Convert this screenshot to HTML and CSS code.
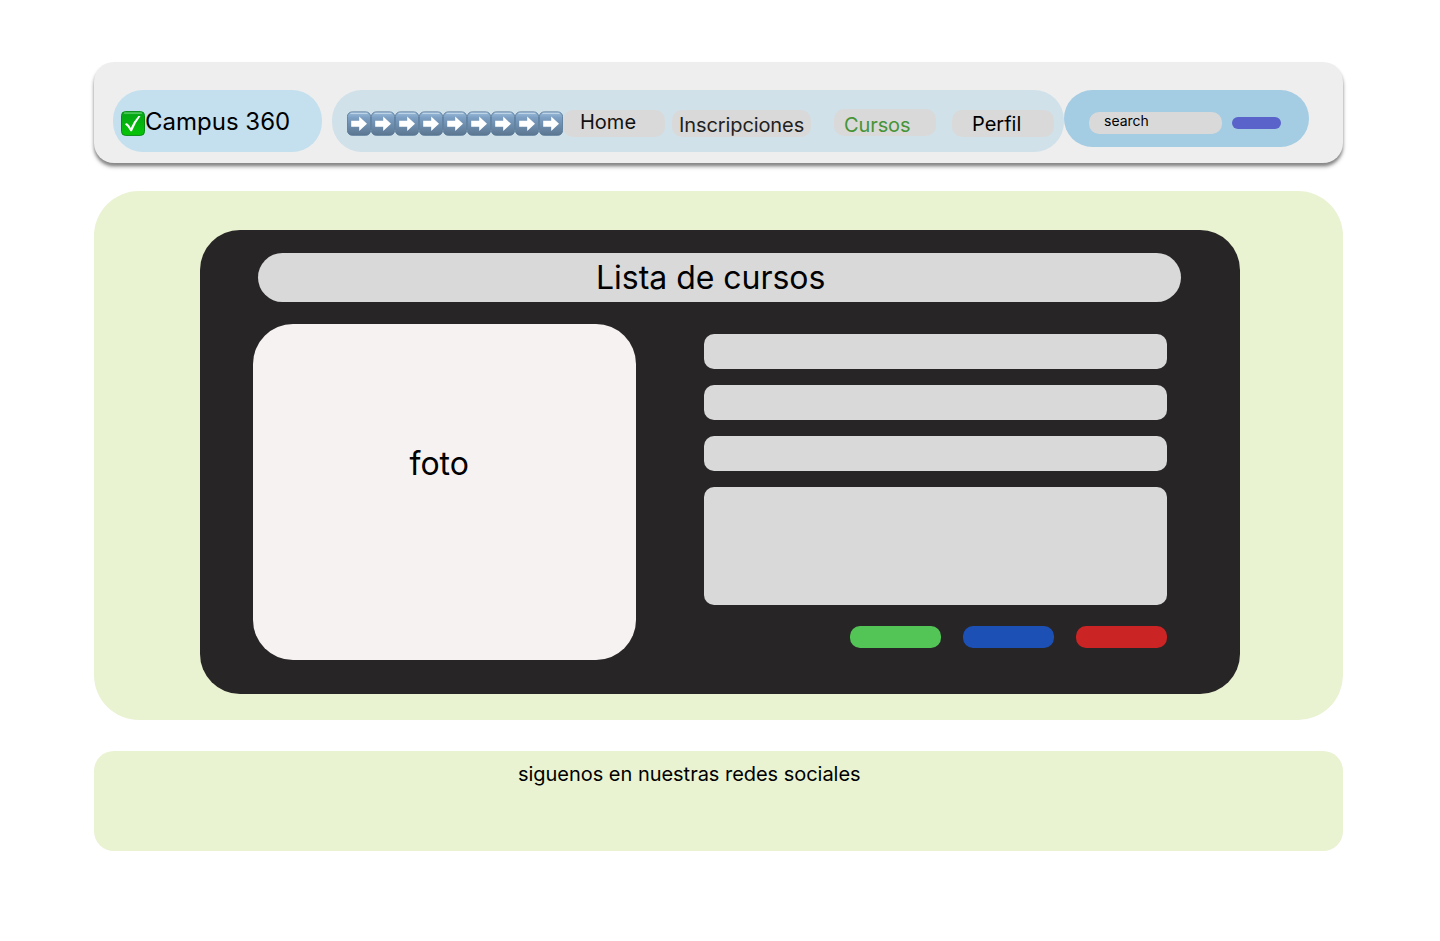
FILE: index.html
```html
<!DOCTYPE html>
<html lang="es">
<head>
<meta charset="utf-8">
<title>Campus 360</title>
<link rel="stylesheet" href="styles.css">
</head>
<body>
<svg width="0" height="0" class="sprite" aria-hidden="true">
  <defs>
    <linearGradient id="green" x1="0" y1="0" x2="0" y2="1">
      <stop offset="0" stop-color="#19b52c"/><stop offset=".15" stop-color="#04a815"/><stop offset="1" stop-color="#06c506"/>
    </linearGradient>
    <linearGradient id="blue" x1="0" y1="0" x2="0" y2="1">
      <stop offset="0" stop-color="#9dbddb"/><stop offset=".25" stop-color="#7c9fc3"/><stop offset="1" stop-color="#5b7690"/>
    </linearGradient>
    <symbol id="arrow" viewBox="0 0 24 25">
      <rect x=".4" y=".9" width="23.2" height="23.4" rx="4.8" fill="url(#blue)" stroke="#587998" stroke-width=".9"/>
      <path d="M4 2.4H20" stroke="#bdd4e6" stroke-width="1.1" stroke-linecap="round"/>
      <path d="M4.2 9.8H12.2V5.6L20 12.8L12.2 20V15.8H4.2Z" fill="#fff"/>
    </symbol>
  </defs>
</svg>
<div class="page">
  <header class="header">
    <div class="brand">
      <svg class="check" viewBox="0 0 24 25">
        <rect x=".5" y=".6" width="23" height="23.8" rx="4" fill="url(#green)" stroke="#078b16"/>
        <path d="M3.5 2.1H20.5" stroke="#75d57d" stroke-width="1" stroke-linecap="round"/>
        <path d="M4 13.2Q5 12 6.3 12.4Q8.3 13.8 9.8 17Q12.5 10.5 17.4 5H19.5Q14.6 11.3 10.9 20.2H9.5Q7.3 15.7 4 13.2Z" fill="#fff"/>
      </svg>
      <span class="brand-name">Campus 360</span>
    </div>
    <nav class="nav">
      <div class="arrows">
        <svg><use href="#arrow"/></svg><svg><use href="#arrow"/></svg><svg><use href="#arrow"/></svg>
        <svg><use href="#arrow"/></svg><svg><use href="#arrow"/></svg><svg><use href="#arrow"/></svg>
        <svg><use href="#arrow"/></svg><svg><use href="#arrow"/></svg><svg><use href="#arrow"/></svg>
      </div>
      <a class="link home">Home</a>
      <a class="link inscripciones">Inscripciones</a>
      <a class="link cursos">Cursos</a>
      <a class="link perfil">Perfil</a>
    </nav>
    <div class="search">
      <div class="search-field">search</div>
      <div class="search-button"></div>
    </div>
  </header>
  <main class="main">
    <section class="card">
      <h1 class="title">Lista de cursos</h1>
      <div class="content">
        <div class="photo">foto</div>
        <div class="form">
          <div class="field"></div>
          <div class="field"></div>
          <div class="field"></div>
          <div class="field area"></div>
          <div class="actions">
            <div class="button green"></div>
            <div class="button blue"></div>
            <div class="button red"></div>
          </div>
        </div>
      </div>
    </section>
  </main>
  <footer class="footer">siguenos en nuestras redes sociales</footer>
</div>
</body>
</html>
```
FILE: styles.css
```css
* { box-sizing: border-box; }
body { margin: 0; background: #fff; color: #000; font-family: Inter, sans-serif; }
.sprite { display: block; }
.page { height: 941px; padding: 62px 97px 0 94px; }
.header {
  display: flex; align-items: flex-start; height: 101px; padding: 28px 0 0 19px;
  background: #eee; border-radius: 20px; box-shadow: 0 4px 4px rgba(0,0,0,.25), 0 3px 3px rgba(0,0,0,.3);
}
.brand {
  display: flex; width: 209px; height: 62px; margin-right: 10px; padding: 16px 0 0 8px;
  background: #c4e0ee; border-radius: 30px;
}
.check { width: 24px; height: 25px; margin-top: 5px; }
.brand-name { font-size: 24px; line-height: 31px; white-space: nowrap; }
.nav {
  display: flex; align-items: flex-start; width: 732px; height: 62px; padding: 20px 0 0 15px;
  background: #d0e1e9; border-radius: 30px;
}
.arrows { display: flex; flex: none; margin-top: 1px; }
.arrows svg { display: block; width: 24px; height: 25px; }
.link {
  flex: none; width: 102px; height: 27px; background: #d9d9d9; border-radius: 10px;
  font-size: 20px; line-height: 24px; white-space: nowrap;
}
.home { padding-left: 17px; color: #111; }
.inscripciones { width: 139px; margin-left: 7px; padding: 3px 0 0 7px; color: #222; letter-spacing: -.1px; }
.cursos { margin: -1px 0 0 23px; padding: 4px 0 0 10px; color: #459437; letter-spacing: -.1px; }
.perfil { margin-left: 16px; padding: 2px 0 0 20px; }
.search {
  display: flex; width: 245px; height: 57px; padding: 22px 0 0 25px;
  background: #a4cce3; border-radius: 28.5px;
}
.search-field {
  width: 133px; height: 22px; padding-left: 15px; background: #d9d9d9; border-radius: 10px;
  font-size: 14px; line-height: 18px;
}
.search-button { width: 49px; height: 12px; margin: 5px 0 0 10px; background: #5963c9; border-radius: 6px; }
.main { height: 529px; margin-top: 28px; padding: 39px 103px 26px 106px; background: #e9f2d1; border-radius: 45px; }
.card { height: 464px; padding: 23px 0 0 53px; background: #272526; border-radius: 40px; }
.title {
  width: 923px; height: 49px; margin: 0 0 0 5px; padding-left: 338px;
  background: #d9d9d9; border-radius: 24.5px; font-size: 32px; font-weight: 400; line-height: 49px; letter-spacing: -.03px;
}
.content { display: flex; margin-top: 22px; }
.photo {
  width: 383px; height: 336px; padding: 120px 0 0 156.5px;
  background: #f6f2f1; border-radius: 40px; font-size: 32px; line-height: 40px;
}
.form { display: flex; flex-direction: column; gap: 16px; width: 463px; margin: 10px 0 0 68px; }
.field { height: 35px; background: #d9d9d9; border-radius: 10px; }
.area { height: 118px; }
.actions { display: flex; justify-content: flex-end; gap: 22px; margin-top: 5px; }
.button { width: 91px; height: 22px; border-radius: 10px; }
.green { background: #53c556; }
.blue { background: #1d50b5; }
.red { background: #cb2424; }
.footer {
  height: 100px; margin-top: 31px; padding: 11px 0 0 424px;
  background: #e9f2d1; border-radius: 20px; font-size: 20px; line-height: 24px; letter-spacing: -.03px;
}
```
